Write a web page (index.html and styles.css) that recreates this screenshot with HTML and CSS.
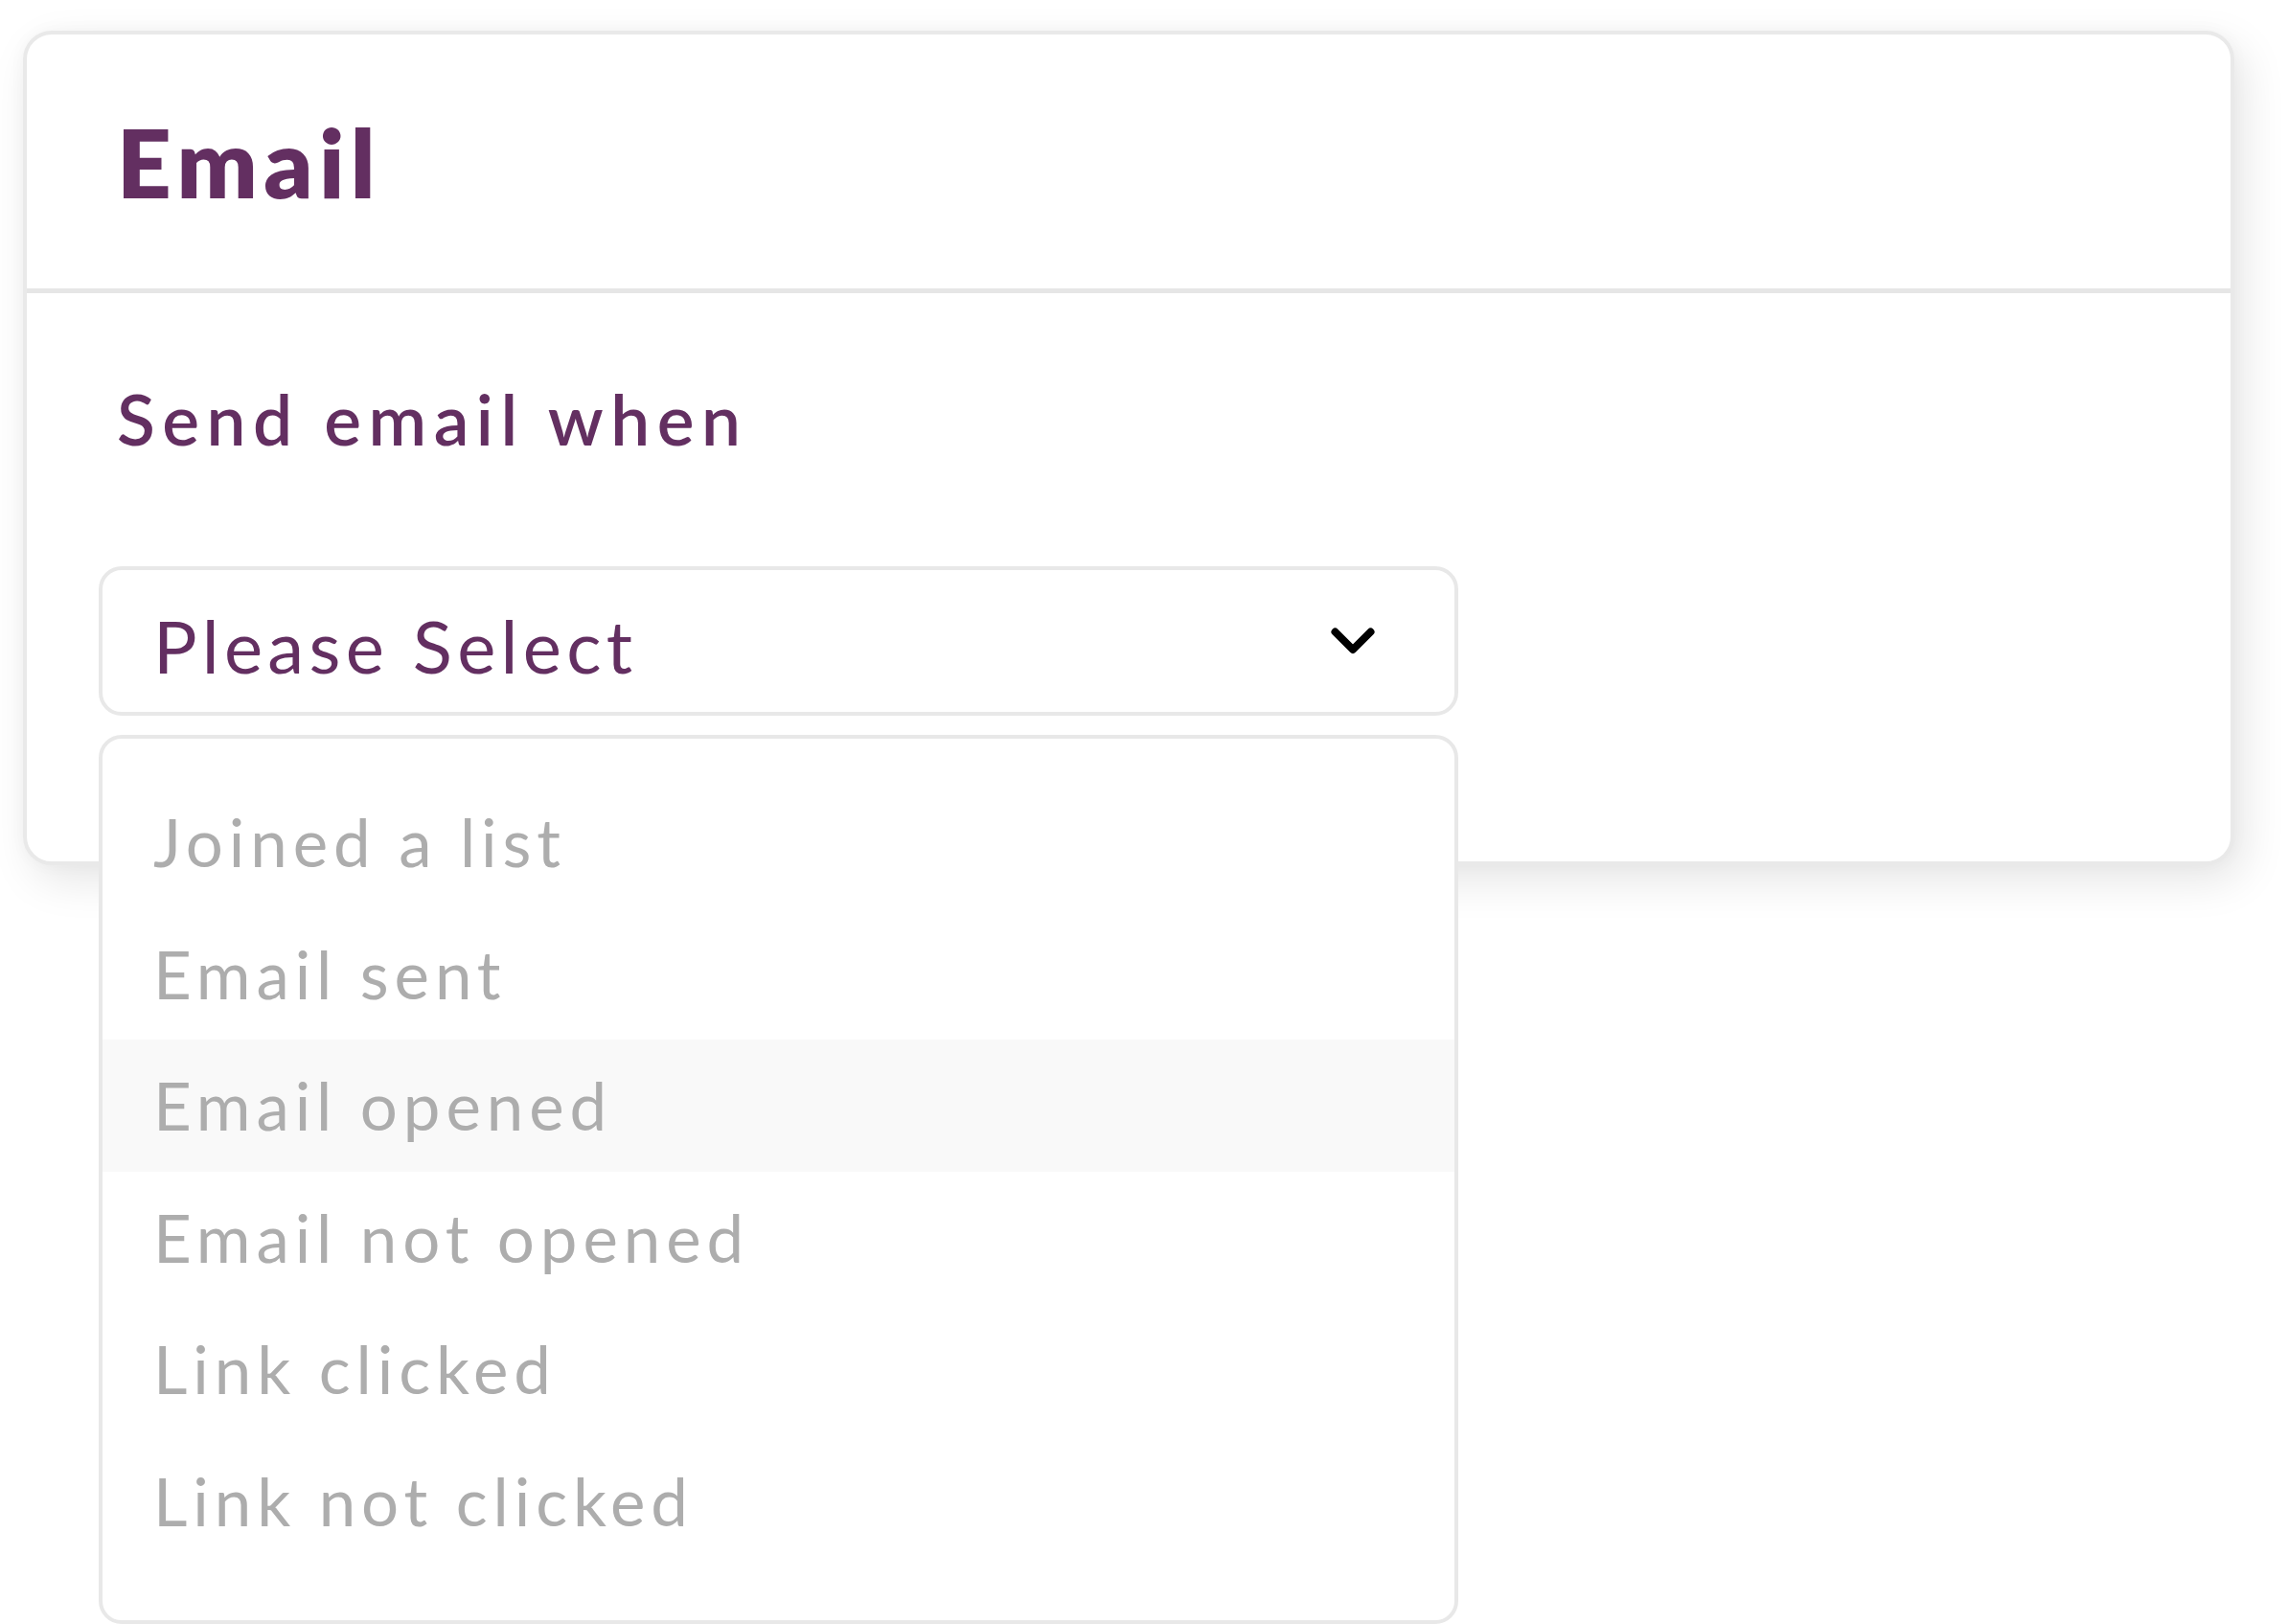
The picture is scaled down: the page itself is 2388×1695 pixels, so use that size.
FILE: index.html
```html
<!DOCTYPE html>
<html lang="en">
<head>
<meta charset="utf-8">
<title>Email</title>
<link rel="stylesheet" href="styles.css">
</head>
<body>
<div class="page">
  <section class="card">
    <header class="card-header">
      <h1 class="card-title">Email</h1>
    </header>
    <div class="card-body">
      <div class="field-label">Send email when</div>
      <div class="select">
        <div class="select-box">
          <span class="select-value">Please Select</span>
          <svg class="chevron" viewBox="0 0 46 28" width="46" height="28" aria-hidden="true">
            <polyline points="4.5,4.5 23,23 41.5,4.5" fill="none" stroke="#000" stroke-width="8" stroke-linecap="round" stroke-linejoin="round"/>
          </svg>
        </div>
        <ul class="dropdown">
          <li class="option">Joined a list</li>
          <li class="option">Email sent</li>
          <li class="option is-hover">Email opened</li>
          <li class="option">Email not opened</li>
          <li class="option">Link clicked</li>
          <li class="option">Link not clicked</li>
        </ul>
      </div>
    </div>
  </section>
</div>
</body>
</html>
```

FILE: styles.css
```css
html {
  height: 100%;
}

html, body {
  margin: 0;
  padding: 0;
  background: #ffffff;
}

body {
  min-height: 100%;
  font-family: "Lato", "Liberation Sans", sans-serif;
  color: #632f61;
}

.page {
  box-sizing: border-box;
  min-height: 1695px;
  padding: 32px 56px 0 24px;
}

.card {
  box-sizing: border-box;
  height: 871px;
  border: 4px solid #e9e9e9;
  border-radius: 30px;
  background: #ffffff;
  box-shadow: 10px 16px 46px rgba(0, 0, 0, 0.1), 0 0 18px rgba(0, 0, 0, 0.03);
}

.card-header {
  box-sizing: border-box;
  height: 270px;
  border-bottom: 5px solid #e6e6e6;
  display: flex;
  align-items: center;
  padding-left: 94px;
}

.card-title {
  margin: 0;
  font-size: 99px;
  font-weight: 800;
  line-height: 1;
  letter-spacing: 6.5px;
  color: #632f61;
}

.card-body {
  padding: 0 0 0 75px;
}

.field-label {
  padding: 0 0 0 19px;
  margin-top: 86px;
  font-size: 73px;
  font-weight: 600;
  line-height: 90px;
  letter-spacing: 7.5px;
  color: #632f61;
}

.select {
  position: relative;
  width: 1419px;
  margin-top: 109px;
}

.select-box {
  box-sizing: border-box;
  height: 156px;
  border: 4px solid #e8e8e8;
  border-radius: 24px;
  display: flex;
  align-items: center;
  justify-content: space-between;
  padding: 0 83px 0 53px;
  background: #ffffff;
}

.select-value {
  font-size: 76px;
  font-weight: 400;
  letter-spacing: 5.3px;
  color: #632f61;
  line-height: 1;
  padding-top: 10px;
}

.chevron {
  display: block;
  margin-top: 0;
}

.dropdown {
  position: absolute;
  left: 0;
  right: 0;
  top: calc(100% + 20px);
  box-sizing: border-box;
  height: 928px;
  margin: 0;
  padding: 39px 0 0 0;
  list-style: none;
  background: #ffffff;
  border: 4px solid #e8e8e8;
  border-radius: 24px;
}

.option {
  height: 137.5px;
  line-height: 137.5px;
  padding-left: 53px;
  font-size: 69px;
  font-weight: 400;
  letter-spacing: 5.9px;
  color: #adadad;
}

.option.is-hover {
  background: #f9f9f9;
}
```
